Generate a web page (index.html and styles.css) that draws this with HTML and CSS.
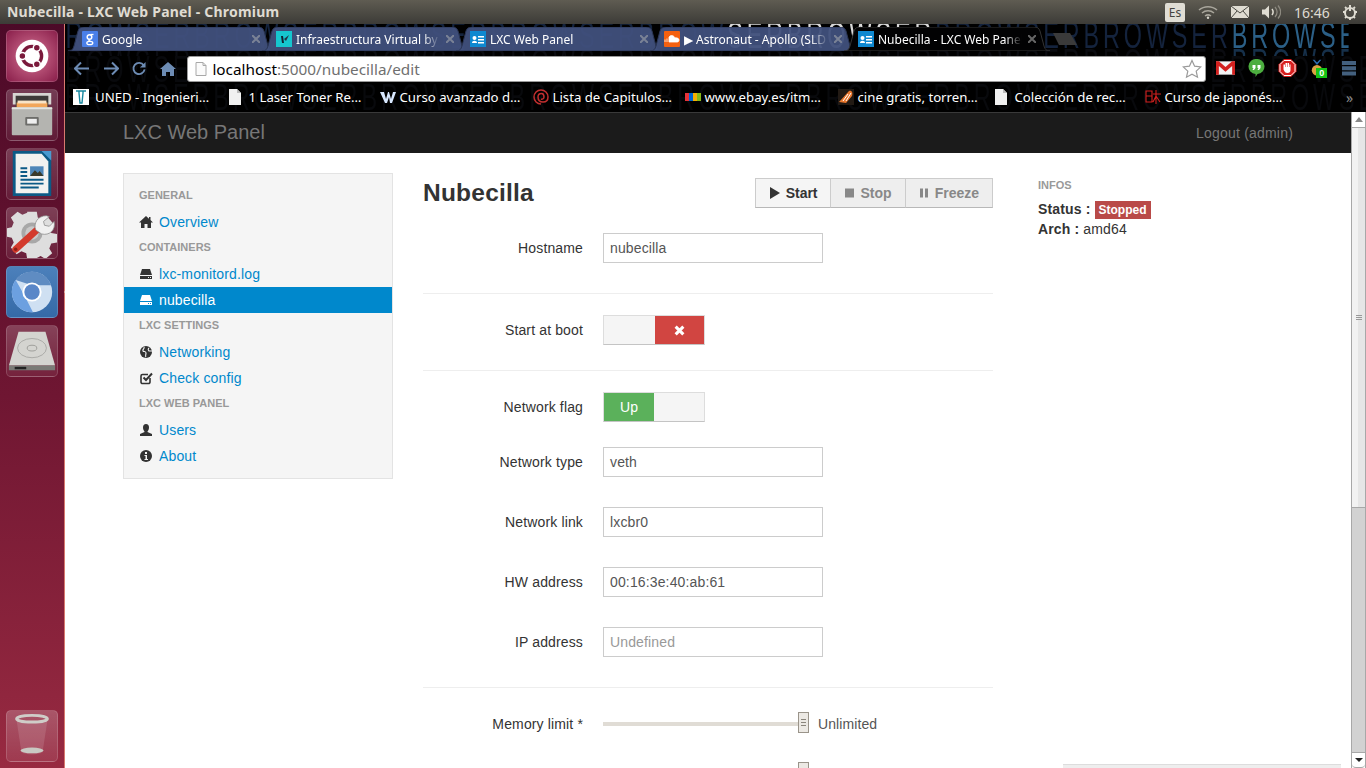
FILE: index.html
```html
<!DOCTYPE html>
<html lang="es">
<head>
<meta charset="utf-8">
<title>Nubecilla - LXC Web Panel - Chromium</title>
<link rel="stylesheet" href="styles.css">
</head>
<body>
<div class="desktop">
  <header class="panel">
    <div class="wintitle">Nubecilla - LXC Web Panel - Chromium</div>
    <div class="indicators">
      <span class="ind-es">Es</span>
      <svg class="ind ind-wifi" viewBox="0 0 20 14"><path d="M1 5c5-4.500 13-4.500 18 0M4 8c3.500-3 8.500-3 12 0M7 11c2-1.500 4-1.500 6 0" fill="none" stroke="#a9a69c" stroke-width="1.500"/><circle cx="10" cy="12.700" r="1.200" fill="#d8d5cb"/></svg>
      <svg class="ind ind-mail" viewBox="0 0 18 12"><rect width="18" height="12" rx="1" fill="#dfdcd2"/><path d="M0 0l9 7 9-7M0 12l6-7M18 12l-6-7" fill="none" stroke="#4a4943" stroke-width="1"/></svg>
      <svg class="ind ind-sound" viewBox="0 0 20 14"><path d="M1 4.500h3l4-4v13l-4-4H1z" fill="#dfdcd2"/><path d="M11 4c1.500 2 1.500 4 0 6" stroke="#dfdcd2" stroke-width="1.500" fill="none"/><path d="M14 2c2.500 3 2.500 7 0 10M17 .5c3.300 4 3.300 9 0 13" stroke="#8d8a80" stroke-width="1.200" fill="none"/></svg>
      <span class="clock">16:46</span>
      <svg class="ind ind-power" viewBox="0 0 16 16"><path d="M8 1v6" stroke="#dfdcd2" stroke-width="2"/><circle cx="8" cy="9" r="5" fill="none" stroke="#dfdcd2" stroke-width="2"/><path d="M1 8h2M13 8h2M3 3l1.500 1.500M13 3l-1.500 1.500M3 14l1.500-1.500M13 14l-1.500-1.500M8 14v2" stroke="#dfdcd2" stroke-width="1.800"/></svg>
    </div>
  </header>

  <div class="work">
    <nav class="launcher">
      <div class="launcher-top">
        <div class="tile tile-ubuntu">
          <svg viewBox="0 0 52 52"><circle cx="26" cy="26" r="17" fill="#fff"/><circle cx="26" cy="26" r="10" fill="none" stroke="#7a1a3c" stroke-width="3.500"/><circle cx="16" cy="26" r="3.600" fill="#7a1a3c" stroke="#fff" stroke-width="1.500"/><circle cx="31" cy="17.500" r="3.600" fill="#7a1a3c" stroke="#fff" stroke-width="1.500"/><circle cx="31" cy="34.500" r="3.600" fill="#7a1a3c" stroke="#fff" stroke-width="1.500"/></svg>
        </div>
        <div class="tile tile-files">
          <svg viewBox="0 0 52 52"><path d="M6 3h40v12H6z" fill="#d6d6d2"/><path d="M9 6h34v16H9z" fill="#3c3a38"/><path d="M10 13h32v10H10z" fill="#f2a65a"/><path d="M11 11h30v3H11z" fill="#f8e3c6"/><rect x="5" y="18" width="42" height="29" rx="1" fill="#b4b4b0"/><rect x="5" y="18" width="42" height="2" fill="#e4e4e0"/><rect x="19" y="28" width="14" height="9" rx="1" fill="#6d6d6a"/><rect x="21" y="30" width="10" height="5" fill="#eee"/></svg>
        </div>
        <div class="tile tile-writer">
          <svg viewBox="0 0 52 52"><path d="M6 2h31l9 9v38H6z" fill="#0c5a86"/><path d="M36 2h10v10z" fill="#4a9ad0"/><path d="M9 5h27l7 8v33H9z" fill="#f2f2f0"/><path d="M14 19h7v2h-7zM14 23h7v2h-7zM14 27h7v2h-7zM14 31h24v2H14zM14 35h24v2H14zM14 39h19v2H14z" fill="#0c5a86"/><rect x="24" y="18" width="14" height="10" fill="#4e86b8"/><path d="M24 28l5-6 3 3 2-2 4 5z" fill="#3a3a2a"/></svg>
        </div>
        <div class="tile tile-tools">
          <svg viewBox="0 0 52 52"><path d="M21 4h10l1 6 5 2 5-3 6 7-4 5 2 5 6 1v9l-6 1-2 5 3 5-7 6-5-3-4 2-1 1H21l-1-6-5-2-5 3-6-7 3-5-2-5-5-1v-9l5-1 2-5-3-5 7-6 5 3 5-2z" fill="#dedede"/><circle cx="26" cy="26" r="11" fill="#a8a8a8"/><circle cx="26" cy="26" r="7" fill="#c9c9c9"/><path d="M9 43L33 21" stroke="#d33a2c" stroke-width="7" stroke-linecap="round"/><circle cx="9" cy="43" r="1.800" fill="#8e1f16"/><path d="M30 23c-3-7 2-15 11-15l3 1-6 5 1 4 5 1 5-5c2 9-5 15-13 13z" fill="#f0f0f0" stroke="#8a8a8a" stroke-width=".8"/></svg>
        </div>
        <div class="tile tile-chrome active">
          <svg viewBox="0 0 52 52"><circle cx="26" cy="26" r="21" fill="#cfe0f2"/><path d="M9 13.500A21 21 0 0 1 46 19H26z" fill="#5f8cc2"/><path d="M5 26a21 21 0 0 1 4-12.500l9 16 9 17.500A21 21 0 0 1 5 26z" fill="#6ca0e0"/><circle cx="26" cy="26" r="10" fill="#fff"/><circle cx="26" cy="26" r="8" fill="#5a87c8"/></svg>
        </div>
        <div class="tile tile-disk">
          <svg viewBox="0 0 52 52"><path d="M12 6h28l10 35H2z" fill="#d4d4d0"/><ellipse cx="26" cy="23" rx="15" ry="10" fill="none" stroke="#a9a9a5"/><ellipse cx="26" cy="23" rx="5" ry="3" fill="none" stroke="#9d9d99"/><path d="M2 41h48v5H2z" fill="#7a7a76"/><path d="M8 42.500h12v2.500H8z" fill="#222"/></svg>
        </div>
      </div>
      <div class="tile tile-trash">
        <svg viewBox="0 0 52 52"><path d="M10 10l5 33c4 3 18 3 22 0l5-33z" fill="#ffffff" fill-opacity=".12"/><ellipse cx="26" cy="41" rx="12" ry="3" fill="#c9c9c3"/><ellipse cx="26" cy="8" rx="16" ry="3.500" fill="none" stroke="#cfcdc8" stroke-width="3"/></svg>
      </div>
    </nav>

    <div class="browser">
      <div class="theme" aria-hidden="true">
        <div class="theme-row theme-top"><span class="dim">BROWSERBROWSERBROWSERBROWSERBROW</span><span class="bright">SERBROWSER</span><span class="dim">BROWSERBROWSER</span><span class="lit">BROWSERBROWSERBROWSER</span></div>
        <div class="theme-row theme-band"><span class="faint">BROWSERBROWSERBROWSERBROWSERBROWSERBROWSERBROWSERBROWSER</span><span class="lit">BROWSERBROWSERBROWSER</span></div>
        <div class="theme-row theme-low">BROWSERBROWSERBROWSERBROWSERBROWSERBROWSERBROWSERBROWSERBROWSERBROWSERBROWSER</div>
        <div class="theme-row theme-low">BROWSERBROWSERBROWSERBROWSERBROWSERBROWSERBROWSERBROWSERBROWSERBROWSERBROWSER</div>
      </div>

      <div class="tabstrip">
        <div class="tab">
          <svg class="tabshape" viewBox="0 0 206 24" preserveAspectRatio="none"><path d="M0 24c4 0 5-2 6-5l4-15c1-3 3-4 6-4h174c3 0 5 1 6 4l4 15c1 3 2 5 6 5z"/></svg>
          <svg class="fav" viewBox="0 0 16 16"><rect width="16" height="16" rx="1" fill="#4a7fe8"/><circle cx="7.500" cy="6" r="2.300" fill="none" stroke="#fff" stroke-width="1.500"/><path d="M7 8.500c-1 1 1 1.500 2 2" fill="none" stroke="#fff" stroke-width="1.200"/><ellipse cx="7.800" cy="12" rx="3" ry="1.700" fill="none" stroke="#fff" stroke-width="1.300"/><path d="M8.500 3.500h3" stroke="#fff" stroke-width="1.300"/></svg>
          <span class="tabtext">Google</span>
          <svg class="tabx" viewBox="0 0 8 8"><path d="M0 0l8 8M8 0L0 8"/></svg>
        </div>
        <div class="tab">
          <svg class="tabshape" viewBox="0 0 206 24" preserveAspectRatio="none"><path d="M0 24c4 0 5-2 6-5l4-15c1-3 3-4 6-4h174c3 0 5 1 6 4l4 15c1 3 2 5 6 5z"/></svg>
          <svg class="fav" viewBox="0 0 16 16"><rect width="16" height="16" fill="#16c6cf"/><path d="M5 5h2l1 7H6z" fill="#123"/><path d="M8 8l5-4-3 6z" fill="#234"/></svg>
          <span class="tabtext">Infraestructura Virtual by</span>
          <svg class="tabx" viewBox="0 0 8 8"><path d="M0 0l8 8M8 0L0 8"/></svg>
        </div>
        <div class="tab">
          <svg class="tabshape" viewBox="0 0 206 24" preserveAspectRatio="none"><path d="M0 24c4 0 5-2 6-5l4-15c1-3 3-4 6-4h174c3 0 5 1 6 4l4 15c1 3 2 5 6 5z"/></svg>
          <svg class="fav" viewBox="0 0 16 16"><rect width="16" height="16" fill="#0f88d0"/><circle cx="4.500" cy="7" r="2" fill="#fff"/><path d="M2 12c0-3 5-3 5 0z" fill="#fff"/><path d="M8 5h6v1.500H8zM8 8h6v1.500H8zM8 11h6v1.500H8z" fill="#fff"/></svg>
          <span class="tabtext">LXC Web Panel</span>
          <svg class="tabx" viewBox="0 0 8 8"><path d="M0 0l8 8M8 0L0 8"/></svg>
        </div>
        <div class="tab">
          <svg class="tabshape" viewBox="0 0 206 24" preserveAspectRatio="none"><path d="M0 24c4 0 5-2 6-5l4-15c1-3 3-4 6-4h174c3 0 5 1 6 4l4 15c1 3 2 5 6 5z"/></svg>
          <svg class="fav" viewBox="0 0 16 16"><rect width="16" height="16" rx="1" fill="#f5600f"/><path d="M1 11V8.500M3 11V7.500M5 11V6c2-2.500 5-1.500 6 1 2-.5 4 .5 4 2s-1 2-2 2z" stroke="#fff" stroke-width=".8" fill="#fff"/></svg>
          <span class="tabtext">▶ Astronaut - Apollo (SLD</span>
          <svg class="tabx" viewBox="0 0 8 8"><path d="M0 0l8 8M8 0L0 8"/></svg>
        </div>
        <div class="tab tab-active">
          <svg class="tabshape" viewBox="0 0 206 24" preserveAspectRatio="none"><path d="M0 24c4 0 5-2 6-5l4-15c1-3 3-4 6-4h174c3 0 5 1 6 4l4 15c1 3 2 5 6 5z"/></svg>
          <svg class="fav" viewBox="0 0 16 16"><rect width="16" height="16" fill="#0f88d0"/><circle cx="4.500" cy="7" r="2" fill="#fff"/><path d="M2 12c0-3 5-3 5 0z" fill="#fff"/><path d="M8 5h6v1.500H8zM8 8h6v1.500H8zM8 11h6v1.500H8z" fill="#fff"/></svg>
          <span class="tabtext">Nubecilla - LXC Web Panel</span>
          <svg class="tabx" viewBox="0 0 8 8"><path d="M0 0l8 8M8 0L0 8"/></svg>
        </div>
        <svg class="newtab" viewBox="0 0 24 12"><path d="M0 0h17l7 12H6z" fill="#3a3a3a"/></svg>
      </div>

      <div class="toolbar">
        <svg class="tool" viewBox="0 0 16 14"><path d="M7 1L1 7l6 6M1 7h14" fill="none" stroke="#6d8cb4" stroke-width="2"/></svg>
        <svg class="tool" viewBox="0 0 16 14"><path d="M9 1l6 6-6 6M15 7H1" fill="none" stroke="#6d8cb4" stroke-width="2"/></svg>
        <svg class="tool" viewBox="0 0 16 16"><path d="M13 4.500A6 6 0 1 0 14 9" fill="none" stroke="#6d8cb4" stroke-width="2"/><path d="M15 1v6H9z" fill="#6d8cb4"/></svg>
        <svg class="tool" viewBox="0 0 16 15"><path d="M8 1L0 8h2v7h4v-4h4v4h4V8h2z" fill="#6d8cb4"/></svg>
        <div class="omnibox">
          <svg class="omni-page" viewBox="0 0 12 14"><path d="M1 .5h7l3 3v10H1z" fill="#fbfbfb" stroke="#a8a8a8"/><path d="M8 .5v3h3" fill="none" stroke="#a8a8a8"/></svg>
          <span class="url"><b class="host">localhost</b>:5000/nubecilla/edit</span>
          <svg class="star" viewBox="0 0 20 20"><path d="M10 1.500l2.600 5.700 6.200.7-4.600 4.200 1.300 6.100L10 15.200l-5.500 3 1.300-6.100L1.200 7.900l6.200-.7z" fill="#fff" stroke="#9a9a9a" stroke-width="1.200"/></svg>
        </div>
        <div class="exts">
          <svg class="ext" viewBox="0 0 20 16"><rect y="1" width="20" height="14" fill="#f2f2f2"/><path d="M0 1h3l7 6 7-6h3v14h-3V6l-7 6-7-6v9H0z" fill="#d3211f"/></svg>
          <svg class="ext" viewBox="0 0 16 18"><path d="M8 0a7.500 7.500 0 0 1 1 15l-2 3v-3A7.500 7.500 0 0 1 8 0z" fill="#4cae3f"/><path d="M4 6h3v3l-1.500 2H4l1-2H4zM9 6h3v3l-1.500 2H9l1-2H9z" fill="#fff"/></svg>
          <svg class="ext" viewBox="0 0 18 18"><path d="M5.500 0h7L18 5.500v7L12.500 18h-7L0 12.500v-7z" fill="#d8201f"/><path d="M5.500 1.500h7l4 4v7l-4 4h-7l-4-4v-7z" fill="none" stroke="#fff"/><path d="M5 8V5.500h1.500V8h.5V4h1.500v4h.5V4h1.500v4h.5V5.500H12V11c0 2-1 3-3 3s-3-1-4-3.500z" fill="#fff"/></svg>
          <span class="ext ext-medal">
            <svg viewBox="0 0 16 20"><path d="M3 0l5 6 5-6-2 0-3 3-3-3z" fill="#2e6db0"/><circle cx="8" cy="12" r="6" fill="#d9a441"/></svg>
            <b class="medal-badge">0</b>
          </span>
          <svg class="menu" viewBox="0 0 16 16"><path d="M1 1h14v4H1zM1 6.200h14v4H1zM1 11.400h14v4H1z" fill="#43607e"/></svg>
        </div>
      </div>

      <div class="bookmarks">
        <span class="bm"><svg class="bmi" viewBox="0 0 16 16"><rect width="16" height="16" fill="#fff"/><path d="M3 2h10M6 2h4v2L9 14H7L6 4z" stroke="#1788a0" fill="none" stroke-width="1.400"/></svg>UNED - Ingenieri…</span>
        <span class="bm"><svg class="bmi" viewBox="0 0 12 16" preserveAspectRatio="xMinYMid"><path d="M0 0h8l4 4v12H0z" fill="#f1f1f1"/><path d="M8 0v4h4" fill="#bbb"/></svg>1 Laser Toner Re…</span>
        <span class="bm"><svg class="bmi" viewBox="0 0 16 16"><path d="M0 3h4l2 7 2-7h1l2 7 2-7h3l-4 11h-2L9 8l-2 6H5z" fill="#d8e8ff"/></svg>Curso avanzado d…</span>
        <span class="bm"><svg class="bmi" viewBox="0 0 16 16"><path d="M8 15a7 7 0 1 1 7-7c0 3-2 5-5 5s-5-2-5-5 2-3.500 3.500-3.500S11 6 11 8s-2 2.500-3 2" fill="none" stroke="#c22f2f" stroke-width="1.500"/></svg>Lista de Capitulos…</span>
        <span class="bm"><svg class="bmi" viewBox="0 0 16 8"><rect width="4" height="8" fill="#e53238"/><rect x="4" width="4" height="8" fill="#0064d2"/><rect x="8" width="4" height="8" fill="#f5af02"/><rect x="12" width="4" height="8" fill="#86b817"/></svg>www.ebay.es/itm…</span>
        <span class="bm"><svg class="bmi" viewBox="0 0 16 16"><rect width="16" height="16" fill="#221a14"/><path d="M1 13L11 2c3-1 4 2 3 5l-6 7z" fill="#e8762c"/><path d="M8 12l5-8M5 12l5-7" stroke="#fff" stroke-width="1"/></svg>cine gratis, torren…</span>
        <span class="bm"><svg class="bmi" viewBox="0 0 12 16" preserveAspectRatio="xMinYMid"><path d="M0 0h8l4 4v12H0z" fill="#f1f1f1"/><path d="M8 0v4h4" fill="#bbb"/></svg>Colección de rec…</span>
        <span class="bm"><svg class="bmi" viewBox="0 0 16 14"><path d="M1 1h6v11H1zM1 6h6M11 0v14M8 4h8M11 6l-3 6M11 6l4 6" fill="none" stroke="#d3211f" stroke-width="1.100"/></svg>Curso de japonés…</span>
        <span class="bm-more">»</span>
      </div>

      <div class="page">
        <div class="webview">
          <div class="navbar">
            <span class="brand">LXC Web Panel</span>
            <span class="logout">Logout (admin)</span>
          </div>
          <div class="content">
            <aside class="sidebar">
              <div class="nav-head first">General</div>
              <a class="nav-link"><svg class="ico" viewBox="0 0 14 14"><path d="M7 1L0 7.500h2V13h3.500V9h3v4H12V7.500h2l-2.500-2.400V2H10v1.700z"/></svg>Overview</a>
              <div class="nav-head">Containers</div>
              <a class="nav-link"><svg class="ico" viewBox="0 0 14 14"><path d="M3 2h8l2 6H1zM1 9h12v3H1z"/><path d="M9 10.500h1M11 10.500h1" stroke="#f5f5f5"/></svg>lxc-monitord.log</a>
              <a class="nav-link is-active"><svg class="ico" viewBox="0 0 14 14"><path d="M3 2h8l2 6H1zM1 9h12v3H1z"/><path d="M9 10.500h1M11 10.500h1" stroke="#0088cc"/></svg>nubecilla</a>
              <div class="nav-head">LXC Settings</div>
              <a class="nav-link"><svg class="ico" viewBox="0 0 14 14"><circle cx="7" cy="7" r="6"/><path d="M5 2c1 2-2 2-1 4 1 1 3 0 3 2s-1 3 0 4M10 3c-1 1-1 2 0 3h3" fill="none" stroke="#f5f5f5" stroke-width="1.100"/></svg>Networking</a>
              <a class="nav-link"><svg class="ico" viewBox="0 0 14 14"><path d="M11 7v4a1.500 1.500 0 0 1-1.500 1.500h-6A1.500 1.500 0 0 1 2 11V5a1.500 1.500 0 0 1 1.500-1.500H9" fill="none" stroke="#333" stroke-width="1.600"/><path d="M4.500 6.500L7 9l6-6.500" fill="none" stroke="#333" stroke-width="2"/></svg>Check config</a>
              <div class="nav-head">LXC Web Panel</div>
              <a class="nav-link"><svg class="ico" viewBox="0 0 14 14"><path d="M7 1c2 0 3 1.500 3 3.500S9 8 8.500 8.500V9L13 11v2H1v-2l4.500-2v-.5C5 8 4 6.500 4 4.500S5 1 7 1z"/></svg>Users</a>
              <a class="nav-link"><svg class="ico" viewBox="0 0 14 14"><circle cx="7" cy="7" r="6"/><path d="M6 3h2v2H6zM5.500 6H8v4h1v1H5.500v-1h1V7h-1z" fill="#f5f5f5"/></svg>About</a>
            </aside>

            <main class="main">
              <div class="title-row">
                <h1 class="title">Nubecilla</h1>
                <div class="btn-group">
                  <span class="btn btn-on"><svg class="btn-ico" viewBox="0 0 10 12"><path d="M0 0l10 6-10 6z"/></svg>Start</span>
                  <span class="btn"><svg class="btn-ico" viewBox="0 0 10 12"><path d="M0 1.500h9v9H0z"/></svg>Stop</span>
                  <span class="btn"><svg class="btn-ico btn-ico-freeze" viewBox="0 0 8 12"><path d="M0 1.500h3v9H0zM5 1.500h3v9H5z"/></svg>Freeze</span>
                </div>
              </div>

              <div class="row row-first"><label class="label">Hostname</label><div class="input">nubecilla</div></div>
              <hr class="rule">
              <div class="row row-toggle"><label class="label">Start at boot</label>
                <div class="toggle"><span class="side side-off side-wide"></span><span class="side side-red"><svg class="side-x" viewBox="0 0 10 10"><path d="M1.500 1.500l7 7M8.500 1.500l-7 7" stroke="#fff" stroke-width="2.800"/></svg></span></div>
              </div>
              <hr class="rule">
              <div class="row row-toggle"><label class="label">Network flag</label>
                <div class="toggle"><span class="side side-green">Up</span><span class="side side-off"></span></div>
              </div>
              <div class="row"><label class="label">Network type</label><div class="input">veth</div></div>
              <div class="row"><label class="label">Network link</label><div class="input">lxcbr0</div></div>
              <div class="row"><label class="label">HW address</label><div class="input">00:16:3e:40:ab:61</div></div>
              <div class="row"><label class="label">IP address</label><div class="input placeholder">Undefined</div></div>
              <hr class="rule">
              <div class="row row-slider"><label class="label">Memory limit *</label>
                <div class="slider"><span class="handle"><i></i><i></i><i></i></span></div>
                <span class="slider-val">Unlimited</span>
              </div>
              <div class="row row-slider"><label class="label"></label>
                <div class="slider"><span class="handle"><i></i><i></i><i></i></span></div>
              </div>
            </main>

            <aside class="infos">
              <div class="infos-head">Infos</div>
              <div class="info-line"><b>Status :</b> <span class="badge">Stopped</span></div>
              <div class="info-line"><b>Arch :</b> amd64</div>
            </aside>
          </div>
          <div class="corner-strip"></div>
        </div>
        <div class="scrollbar">
          <span class="sb-btn"><i class="arrow-up"></i></span>
          <span class="sb-thumb"><span class="grip"><i></i><i></i><i></i></span></span>
          <span class="sb-track"></span>
          <span class="sb-btn sb-btn-end"><i class="arrow-down"></i></span>
        </div>
      </div>
    </div>
  </div>
</div>
</body>
</html>
```

FILE: styles.css
```css
* { box-sizing: border-box; }
html, body { margin: 0; padding: 0; width: 1366px; height: 768px; overflow: hidden; }
body { font-family: "Liberation Sans", Arial, sans-serif; font-size: 14px; color: #333; background: #000; }
svg { display: block; }

.desktop { display: flex; flex-direction: column; width: 1366px; height: 768px; }

/* Top panel */
.panel { flex: 0 0 24px; height: 24px; display: flex; justify-content: space-between; align-items: center; padding-left: 7px; background: linear-gradient(#5f5c52, #3c3b37); color: #dfdbd2; font-family: "Noto Sans", sans-serif; }
.wintitle { font-weight: 700; font-size: 14px; line-height: 24px; letter-spacing: .2px; }
.indicators { display: flex; align-items: center; width: 201px; height: 24px; position: relative; }
.ind-es { width: 20px; height: 19px; margin-right: 13px; background: #e0ddd4; color: #44433e; border-radius: 2px; font-size: 12px; line-height: 19px; text-align: center; }
.ind { flex: none; }
.ind-wifi { width: 20px; height: 14px; margin-right: 13px; }
.ind-mail { width: 18px; height: 12px; margin-right: 12px; }
.ind-sound { width: 20px; height: 14px; margin-right: 13px; }
.clock { font-size: 14px; color: #dfdbd2; width: 35px; margin-right: 13px; white-space: nowrap; }
.ind-power { width: 16px; height: 16px; }

/* Launcher */
.work { flex: 1; display: flex; min-height: 0; }
.launcher { flex: 0 0 65px; display: flex; flex-direction: column; justify-content: space-between; padding: 6px 0 6px 6px; background: linear-gradient(#4c0a28 0, #6f1632 50%, #982a41 100%); border-right: 1px solid #d8796f; }
.launcher-top { display: flex; flex-direction: column; gap: 7px; }
.tile { position: relative; width: 52px; height: 52px; border-radius: 5px; border: 1px solid rgba(255,255,255,.16); background: linear-gradient(rgba(255,255,255,.2), rgba(255,255,255,.06)); }
.tile svg { width: 50px; height: 50px; }
.tile-ubuntu { background: radial-gradient(circle at 50% 50%, #dba0b4 0, #b04a70 50%, #8a1f4b 100%); }
.tile-chrome { background: linear-gradient(#4c80bb, #356aa7); }
.tile-trash { background: linear-gradient(rgba(255,255,255,.22), rgba(255,255,255,.08)); }
.active::before, .active::after { content: ""; position: absolute; top: 20px; border: 5px solid transparent; }
.active::before { left: -12px; border-left-color: #d9d5cf; }
.active::after { right: -12px; border-right-color: #d9d5cf; }

/* Browser */
.browser { flex: 1; min-width: 0; display: flex; flex-direction: column; position: relative; background: #000; }
.theme { position: absolute; left: 0; top: 0; right: 0; height: 88px; overflow: hidden; }
.theme-row { width: 154%; white-space: nowrap; overflow: hidden; transform-origin: 0 0; transform: scaleX(.65); font-family: "Liberation Sans", sans-serif; font-size: 36px; letter-spacing: 6px; }
.theme-top { height: 24px; line-height: 24px; margin-left: -19px; }
.dim { color: #14233d; }
.bright { color: #d8d8d8; }
.lit { color: #2b5f86; }
.faint { color: #0a0b10; }
.theme-band { height: 8px; line-height: 30px; margin-left: -19px; }
.theme-band .lit { color: #16304a; }
.theme-low { height: 28px; line-height: 28px; color: #08090c; }

.tabstrip { position: relative; flex: 0 0 30px; height: 30px; display: flex; align-items: flex-start; padding: 3px 0 0 3px; font-family: "Noto Sans", sans-serif; font-size: 12px; color: #fff; }
.tab { position: relative; flex: 0 0 206px; width: 206px; height: 24px; margin-right: -12px; display: flex; align-items: center; padding: 0 14px; }
.tabshape { position: absolute; left: 0; top: 0; width: 100%; height: 100%; }
.tabshape path { fill: #40507c; fill-opacity: .95; stroke: #2a3554; stroke-width: 1; }
.tab-active .tabshape path { fill: #020203; fill-opacity: 1; stroke: #333; }
.fav { position: relative; flex: 0 0 16px; width: 16px; height: 16px; margin-right: 4px; }
.tabtext { position: relative; flex: 1; min-width: 0; overflow: hidden; white-space: nowrap; line-height: 24px; padding-top: 2px; -webkit-mask-image: linear-gradient(90deg, #000 88%, transparent); mask-image: linear-gradient(90deg, #000 88%, transparent); }
.tabx { position: relative; flex: 0 0 8px; width: 8px; height: 8px; margin-left: 6px; }
.tabx path { stroke: #7a8296; stroke-width: 2; fill: none; }
.tab-active .tabx path { stroke: #666; }
.newtab { position: relative; width: 24px; height: 12px; margin: 6px 0 0 15px; }

.toolbar { position: relative; flex: 0 0 28px; height: 28px; display: flex; align-items: center; padding-left: 3px; }
.tool { flex: none; width: 16px; height: 15px; margin: 0 6.300px; }
.omnibox { flex: 0 0 1019px; height: 26px; margin: 1px 0 0 5px; display: flex; align-items: center; background: #fff; border: 1px solid #9a9a9a; border-radius: 3px; padding: 0 3px 0 7px; font-family: "Noto Sans", sans-serif; font-size: 15.300px; color: #6f6f6f; }
.omni-page { width: 12px; height: 14px; margin-right: 5px; flex: none; }
.url { flex: 1; white-space: nowrap; line-height: 24px; }
.host { font-weight: 400; color: #000; }
.star { width: 20px; height: 20px; flex: none; }
.exts { flex: 1; display: flex; align-items: center; padding-left: 10px; }
.ext { flex: none; width: 19px; height: 18px; margin-right: 12px; }
.ext-medal { position: relative; display: block; }
.ext-medal svg { width: 14px; height: 19px; margin-left: 1px; }
.medal-badge { position: absolute; left: 7px; top: 9px; width: 11px; height: 10px; background: #15c515; color: #fff; font: 700 9px/10px "Liberation Sans", sans-serif; text-align: center; }
.menu { width: 16px; height: 16px; margin-left: 1px; flex: none; }

.bookmarks { position: relative; flex: 0 0 30px; height: 30px; display: grid; grid-template-columns: 156px 151px 153px 152px 153px 157px 150px 1fr 20px; align-items: center; padding-left: 8px; font-family: "Noto Sans", sans-serif; font-size: 13.200px; color: #fff; }
.bm { display: flex; align-items: center; white-space: nowrap; overflow: hidden; }
.bmi { flex: 0 0 16px; width: 16px; height: 16px; margin-right: 3.500px; }
.bm:first-child .bmi { margin-right: 6px; }
.bm-more { color: #8a8a8a; font-size: 14px; }

/* Page */
.page { flex: 1; min-height: 0; display: flex; }
.webview { position: relative; flex: 1; min-width: 0; background: #fff; border-top: 1px solid #3a3a3a; overflow: hidden; }
.navbar { height: 40px; display: flex; justify-content: space-between; align-items: center; padding: 0 58px; background: #1b1b1b; color: #777; }
.brand { font-size: 20px; line-height: 38px; margin-bottom: 2px; }
.logout { font-size: 14px; letter-spacing: .2px; }

.content { display: flex; align-items: flex-start; padding: 20px 0 0 58px; letter-spacing: .14px; }
.sidebar { flex: 0 0 270px; width: 270px; background: #f5f5f5; border: 1px solid #e3e3e3; padding: 11px 0 9px; }
.nav-head { height: 20px; line-height: 20px; margin: 2px 0 4px; padding-left: 15px; font-size: 11px; font-weight: 700; color: #999; text-transform: uppercase; letter-spacing: 0; }
.nav-head.first { margin-top: 0; }
.nav-link { display: flex; align-items: center; height: 26px; padding-left: 15px; color: #0088cc; line-height: 26px; }
.ico { flex: 0 0 14px; width: 14px; height: 14px; margin-right: 6px; fill: #333; }
.is-active { background: #0088cc; color: #fff; }
.is-active .ico { fill: #fff; }

.main { flex: 0 0 570px; width: 570px; margin-left: 30px; padding-top: 5px; }
.title-row { display: flex; justify-content: space-between; align-items: center; height: 30px; }
.title { margin: 0; font-size: 24.500px; font-weight: 700; line-height: 30px; color: #333; letter-spacing: .22px; }
.btn-group { display: flex; height: 30px; letter-spacing: 0; }
.btn { display: flex; align-items: center; height: 30px; padding: 0 13px 0 14px; background: #eee; border: 1px solid #ccc; border-bottom-color: #b8b8b8; margin-left: -1px; font-weight: 700; color: #888; white-space: nowrap; }
.btn:first-child { margin-left: 0; padding-right: 12px; }
.btn-on { background: #f5f5f5; color: #333; }
.btn-ico { width: 10px; height: 12px; margin-right: 6px; fill: #888; flex: none; }
.btn-on .btn-ico { fill: #333; }
.btn-ico-freeze { width: 8px; margin-right: 7px; }

.row { display: flex; align-items: center; height: 30px; margin-bottom: 30px; }
.row-first { margin-top: 25px; }
.row-toggle { margin-bottom: 25px; }
.row-slider { margin-bottom: 20px; }
.label { flex: 0 0 160px; width: 160px; margin-right: 20px; text-align: right; color: #333; }
.input { width: 220px; height: 30px; line-height: 28px; padding: 0 6px; border: 1px solid #ccc; background: #fff; color: #555; }
.placeholder { color: #999; }
.rule { height: 1px; border: 0; margin: 0 0 21px; background: #eee; }

.toggle { display: flex; width: 102px; height: 30px; border: 1px solid #ddd; border-bottom-color: #c4c4c4; background: #f5f5f5; }
.side { flex: 1; display: flex; align-items: center; justify-content: center; }
.side-off { background: #f5f5f5; }
.side-wide { flex: 0 0 51px; }
.side-red { background: #d14541; }
.side-green { background: #5bb15b; color: #fff; }
.side-x { width: 11px; height: 11px; }

.slider { position: relative; width: 200px; height: 4px; background: #e0dcd5; }
.handle { position: absolute; right: -6px; top: -10px; width: 11px; height: 21px; display: flex; flex-direction: column; align-items: center; justify-content: center; gap: 2px; background: #ece9e4; border: 1px solid #9a948a; }
.handle i { display: block; width: 5px; height: 1px; background: #8a857c; }
.slider-val { margin-left: 15px; color: #555; letter-spacing: .1px; }

.infos { margin-left: 45px; padding-top: 2px; line-height: 20px; color: #333; }
.infos-head { font-size: 11px; font-weight: 700; color: #999; text-transform: uppercase; height: 20px; margin-bottom: 4px; letter-spacing: 0; }
.info-line { height: 20px; }
.badge { display: inline-block; padding: 0 4px; height: 18px; line-height: 18px; background: #b94a48; color: #fff; font-size: 12px; font-weight: 700; letter-spacing: 0; }

.corner-strip { position: absolute; left: 998px; bottom: 0; width: 278px; height: 4px; background: #eee; border-top: 1px solid #ddd; }

/* Scrollbar */
.scrollbar { flex: 0 0 15px; width: 15px; display: flex; flex-direction: column; background: #fff; border-left: 1px solid #a8a8a8; border-right: 1px solid #a8a8a8; }
.sb-btn { flex: 0 0 16px; display: flex; align-items: center; justify-content: center; background: #fff; border-bottom: 1px solid #a8a8a8; }
.sb-btn-end { border-top: 1px solid #a8a8a8; border-radius: 0 0 4px 4px; }
.arrow-up { width: 0; height: 0; border: 4px solid transparent; border-top: 0; border-bottom: 5px solid #888; }
.arrow-down { width: 0; height: 0; border: 4px solid transparent; border-bottom: 0; border-top: 4px solid #222; }
.sb-thumb { flex: 0 0 380px; display: flex; align-items: center; justify-content: center; background: linear-gradient(90deg, #f2f2f2 50%, #e6e6e6 50%); border-bottom: 1px solid #a8a8a8; }
.grip { display: flex; flex-direction: column; gap: 1px; }
.grip i { display: block; width: 6px; height: 1px; background: #999; }
.sb-track { flex: 1; background: #d2d2d2; }
```
